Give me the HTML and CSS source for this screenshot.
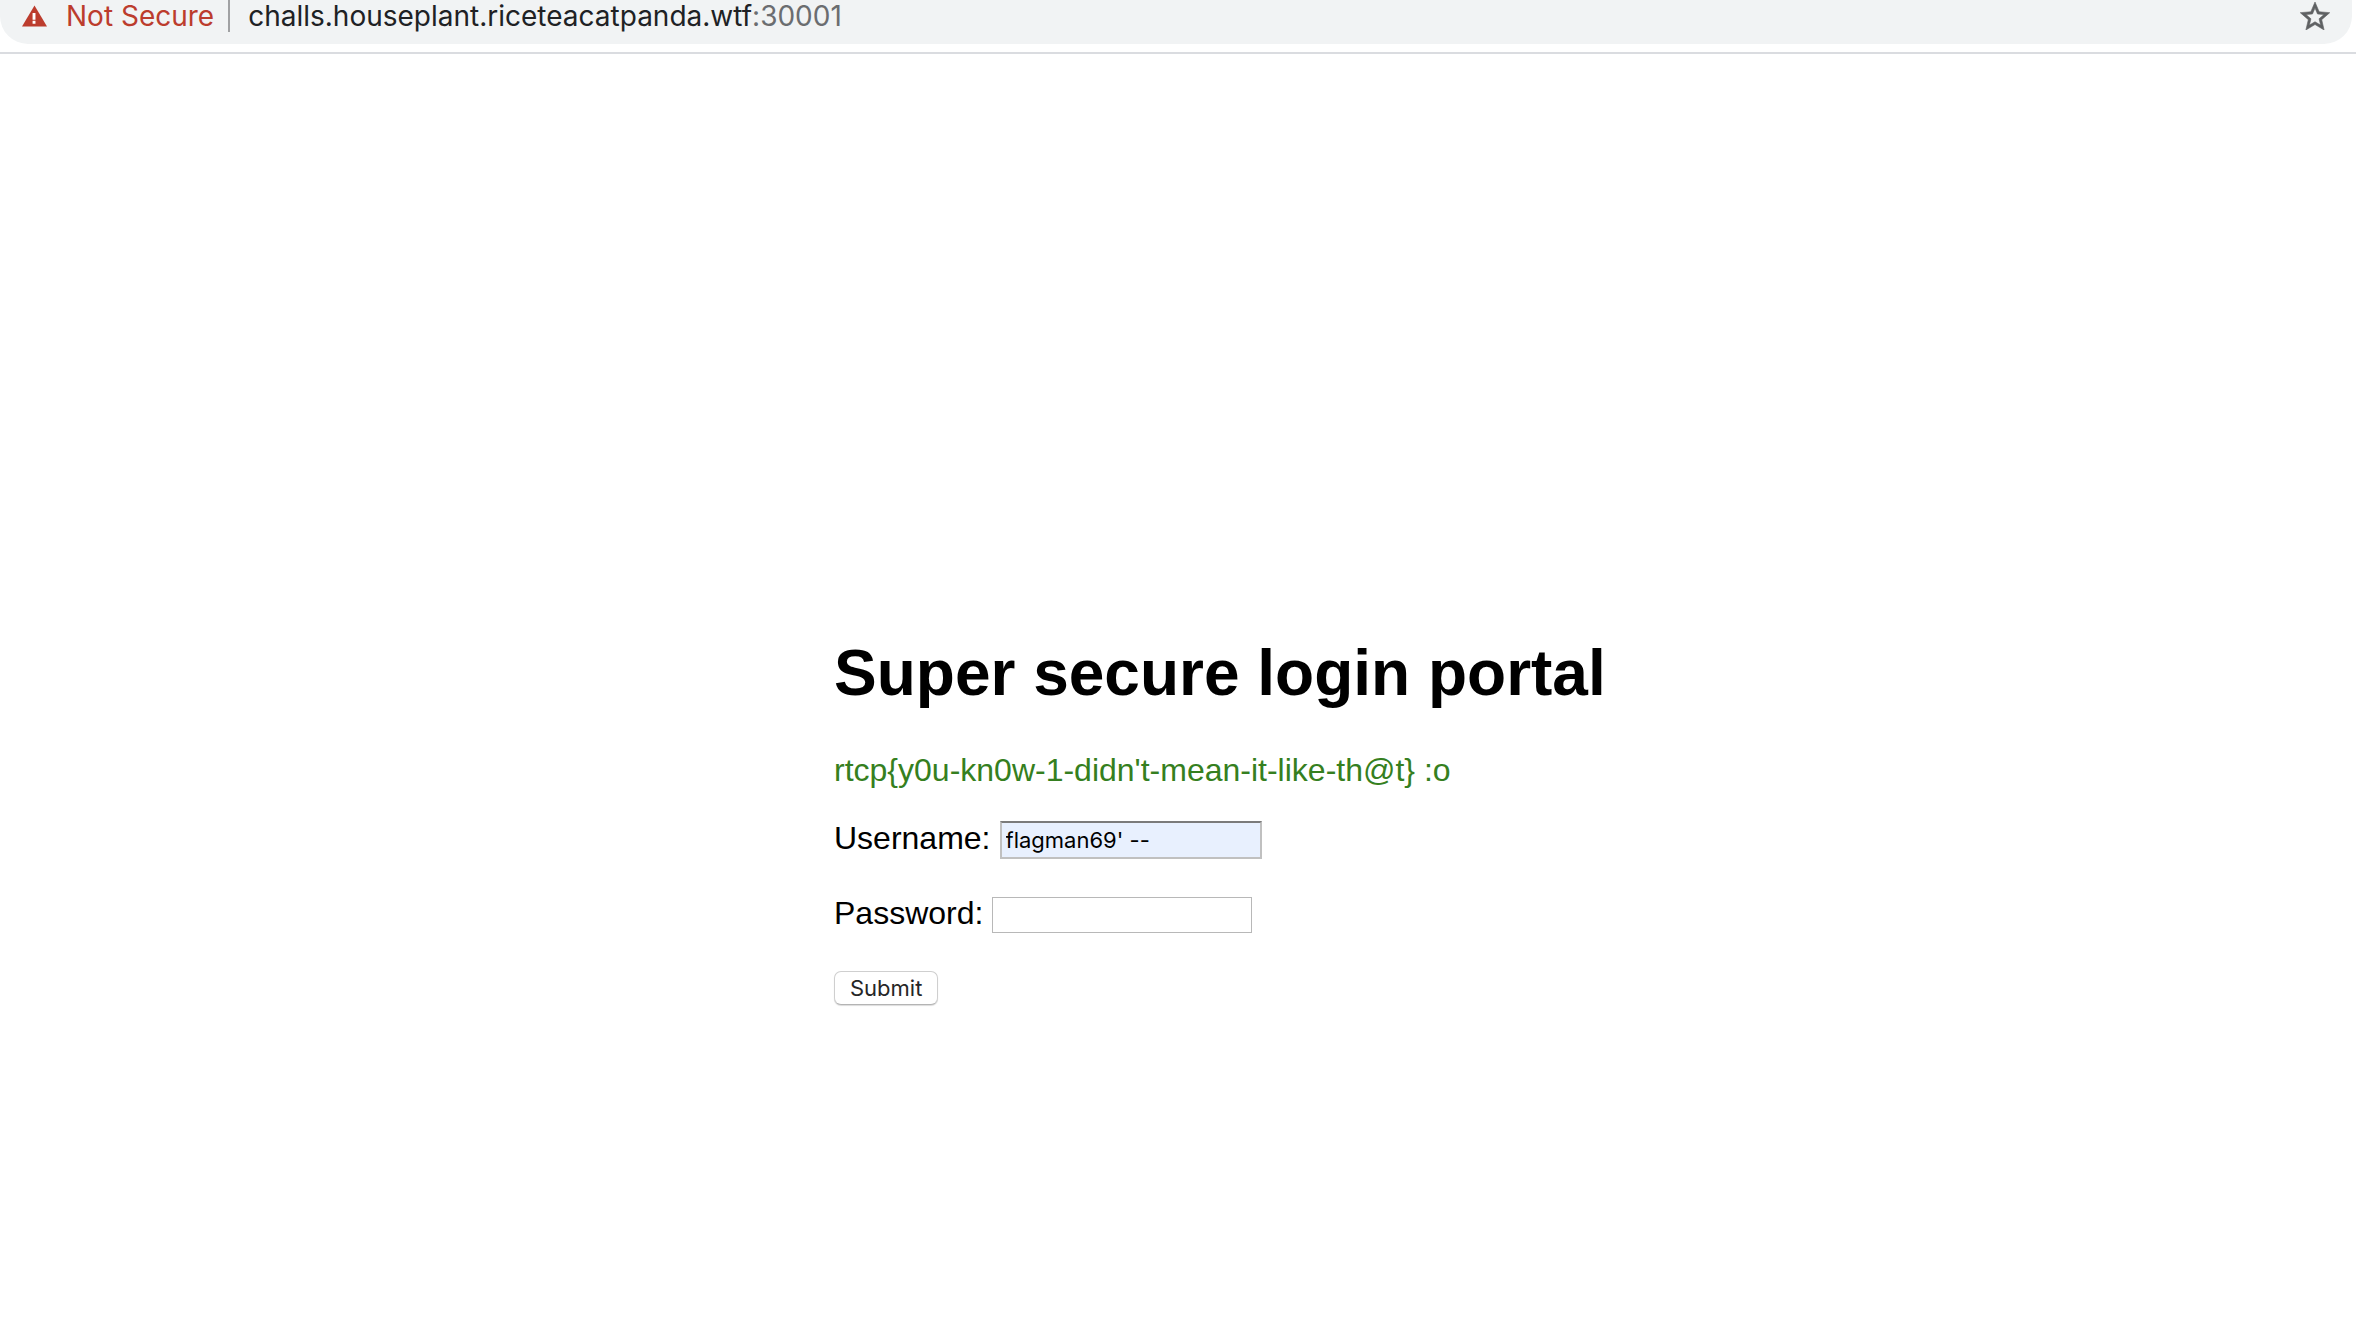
FILE: index.html
```html
<!DOCTYPE html>
<html lang="en">
<head>
<meta charset="utf-8">
<title>Super secure login portal</title>
<link rel="stylesheet" href="styles.css">
</head>
<body>
<header class="toolbar">
  <div class="address-bar">
    <svg class="warning-icon" viewBox="0 0 26 22" aria-hidden="true"><path fill="#bc3c2d" d="M13 0 26 22H0Z"/><path fill="#fff" d="M11 8h3v7h-3zM11 16h3v3h-3z"/></svg>
    <span class="not-secure">Not Secure</span>
    <span class="divider"></span>
    <span class="url">challs.houseplant.riceteacatpanda.wtf<span class="port">:30001</span></span>
    <button class="bookmark" type="button" aria-label="Bookmark this page">
      <svg class="star-icon" viewBox="2 2 20 19" aria-hidden="true"><path fill="#5f6163" stroke="#5f6163" stroke-width=".4" d="M22 9.24l-7.19-.62L12 2 9.19 8.63 2 9.24l5.46 4.73L5.82 21 12 17.27 18.18 21l-1.63-7.03L22 9.24zM12 15.4l-3.76 2.27 1-4.28-3.32-2.88 4.38-.38L12 6.1l1.71 4.04 4.38.38-3.32 2.88 1 4.28L12 15.4z"/></svg>
    </button>
  </div>
</header>
<main class="portal">
  <h1 class="title">Super secure login portal</h1>
  <p class="message">rtcp{y0u-kn0w-1-didn't-mean-it-like-th@t} :o</p>
  <form class="login">
    <div class="field">
      <label class="label" for="username">Username:</label>
      <input class="input input-filled" id="username" type="text" value="flagman69' --">
    </div>
    <div class="field">
      <label class="label" for="password">Password:</label>
      <input class="input" id="password" type="password">
    </div>
    <button class="submit" type="submit">Submit</button>
  </form>
</main>
</body>
</html>
```
FILE: styles.css
```css
* {
  box-sizing: border-box;
}

body {
  margin: 0;
  min-height: 100vh;
  display: flex;
  flex-direction: column;
  background: #fff;
  color: #000;
  font: 32px/36px "Liberation Sans", Arial, sans-serif;
}

.toolbar {
  padding: 0 4px 8px 0;
  border-bottom: 2px solid #dadce0;
}

.address-bar {
  display: flex;
  align-items: center;
  height: 44px;
  padding: 0 22px 12px 22px;
  border-radius: 0 0 28px 28px;
  background: #f1f3f4;
  color: #202124;
  font: 28px/32px Inter, sans-serif;
  white-space: nowrap;
}

.warning-icon {
  width: 25px;
  height: 22px;
}

.not-secure {
  margin-left: 19px;
  color: #bc3c2d;
}

.divider {
  width: 2px;
  height: 32px;
  margin: 0 18px 0 14px;
  background: #a0a1a3;
}

.port {
  color: #6b6d70;
}

.bookmark {
  display: flex;
  margin-left: auto;
  padding: 0;
  border: 0;
  background: none;
}

.star-icon {
  width: 30px;
  height: 28px;
}

.portal {
  width: 688px;
  max-width: 100%;
  margin: auto;
  padding-top: 252px;
}

.title {
  margin: 0 0 42px;
  font-size: 64px;
  line-height: 74px;
  white-space: nowrap;
}

.message {
  margin: 0 0 33px;
  color: #357f20;
}

.login {
  display: flex;
  flex-direction: column;
  align-items: flex-start;
  gap: 38px;
}

.field {
  display: flex;
  align-items: center;
  gap: 9px;
}

.label {
  padding-bottom: 4px;
  line-height: 32px;
}

.input {
  width: 260px;
  height: 36px;
  padding: 0 4px;
  border: 1px solid #b8b8b8;
  background: #fff;
  font: 22px/28px Inter, sans-serif;
}

.input-filled {
  width: 262px;
  height: 38px;
  border: 2px solid #c0c0c0;
  border-top-color: #7b7b7b;
  background: #e8f0fe;
}

.submit {
  height: 34px;
  padding: 0 15px;
  border: 1px solid #cfcfcf;
  border-bottom-color: #b4b4b4;
  border-radius: 7px;
  background: #fff;
  box-shadow: 0 1px 1px #dcdcdc;
  color: #262626;
  font: 22px/28px Inter, sans-serif;
}
```
